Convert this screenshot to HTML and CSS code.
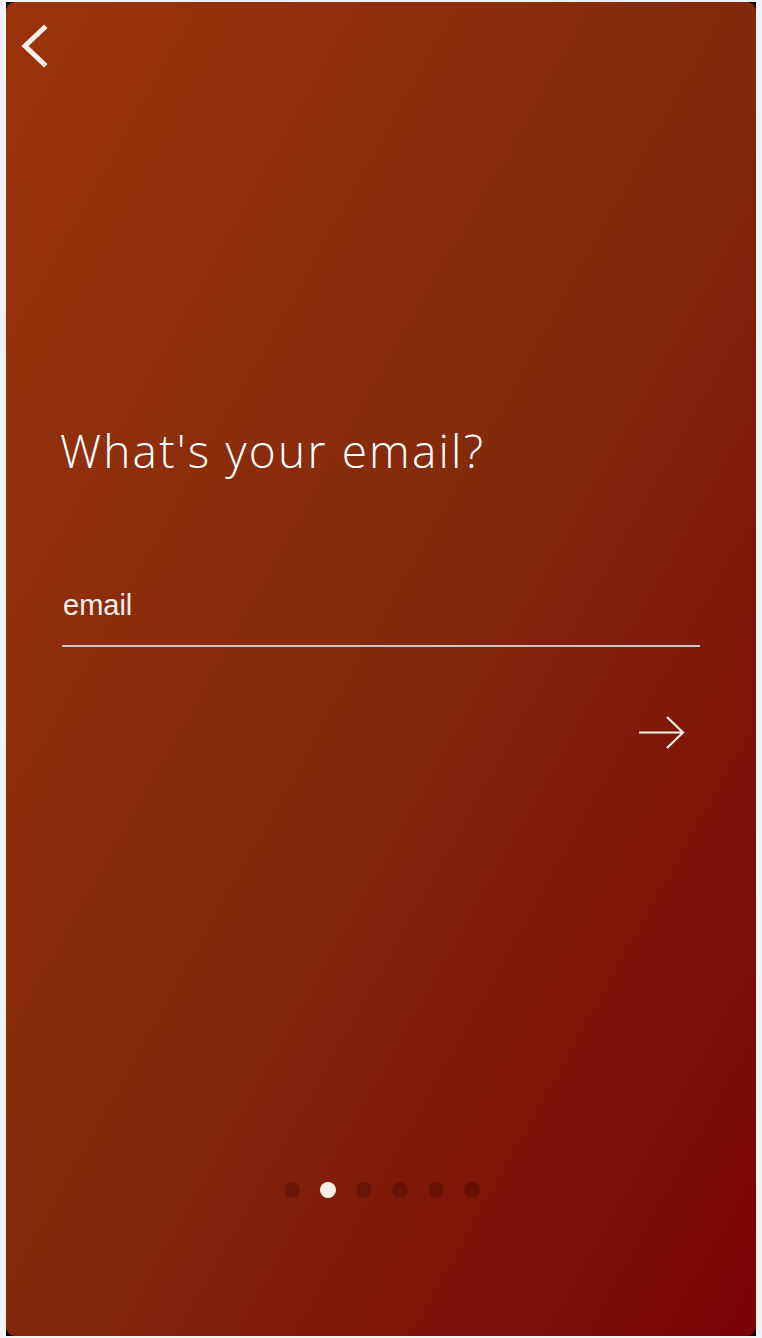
FILE: index.html
```html
<!DOCTYPE html>
<html lang="en">
<head>
<meta charset="utf-8">
<title>What's your email?</title>
<link rel="stylesheet" href="styles.css">
</head>
<body>
<div class="device">
  <main class="screen">
    <header class="topbar">
      <button class="back" aria-label="Back">
        <svg width="30" height="44" viewBox="0 0 30 44"><polyline points="24,4 5,22 24,40" fill="none" stroke="#fcefe8" stroke-width="5" stroke-linecap="square" stroke-linejoin="miter"/></svg>
      </button>
    </header>
    <section class="content">
      <h1 class="title">What's your email?</h1>
      <label class="field">
        <input class="input" type="email" placeholder="email">
      </label>
      <div class="actions">
        <button class="next" aria-label="Next">
          <svg width="48" height="36" viewBox="0 0 48 36"><path d="M1 17.5 H45 M29 2 L45 17.5 L29 33" fill="none" stroke="#fcefe8" stroke-width="2.2"/></svg>
        </button>
      </div>
    </section>
    <nav class="dots">
      <span class="dot"></span>
      <span class="dot active"></span>
      <span class="dot"></span>
      <span class="dot"></span>
      <span class="dot"></span>
      <span class="dot"></span>
    </nav>
  </main>
</div>
</body>
</html>
```

FILE: styles.css
```css
* { box-sizing: border-box; }
html, body { margin: 0; padding: 0; }
body {
  background: #f2f2f4;
  padding: 2px 6px;
  font-family: "Liberation Sans", Arial, sans-serif;
}
.device {
  width: 750px;
  height: 1334px;
  background: #000;
}
.screen {
  width: 750px;
  height: 1334px;
  border-radius: 9px;
  background: linear-gradient(to bottom right, #9a330d 0%, #822a0b 50%, #7a0206 100%);
  display: flex;
  flex-direction: column;
  overflow: hidden;
}
.topbar {
  padding: 22px 0 0 14px;
  height: 100px;
}
.back {
  background: none;
  border: 0;
  padding: 0;
  display: block;
  cursor: pointer;
}
.back svg { display: block; }
.content {
  padding: 320px 50px 0 56px;
  flex: 1;
}
.title {
  margin: 0 0 0 -2px;
  font-family: "Open Sans", sans-serif;
  font-weight: 300;
  font-size: 46px;
  line-height: 56px;
  color: #fff;
  letter-spacing: 2.2px;
}
.field {
  display: block;
  margin-top: 111px;
}
.input {
  display: block;
  width: 638px;
  background: transparent;
  border: 0;
  border-bottom: 2px solid #cfc7c5;
  color: #fff;
  font-family: "Liberation Sans", Arial, sans-serif;
  font-size: 29px;
  padding: 0 0 23px 1px;
  outline: none;
}
.input::placeholder { color: #fdf1ea; opacity: 1; }
.actions {
  display: flex;
  justify-content: flex-end;
  width: 638px;
  margin-top: 68px;
}
.next {
  background: none;
  border: 0;
  padding: 0;
  margin-right: 14px;
  cursor: pointer;
}
.next svg { display: block; }
.dots {
  display: flex;
  justify-content: center;
  gap: 20px;
  padding-left: 2px;
  margin-bottom: 138px;
}
.dot {
  width: 16px;
  height: 16px;
  border-radius: 50%;
  background: rgba(40, 0, 0, 0.25);
}
.dot.active { background: #fbefe8; }
```
